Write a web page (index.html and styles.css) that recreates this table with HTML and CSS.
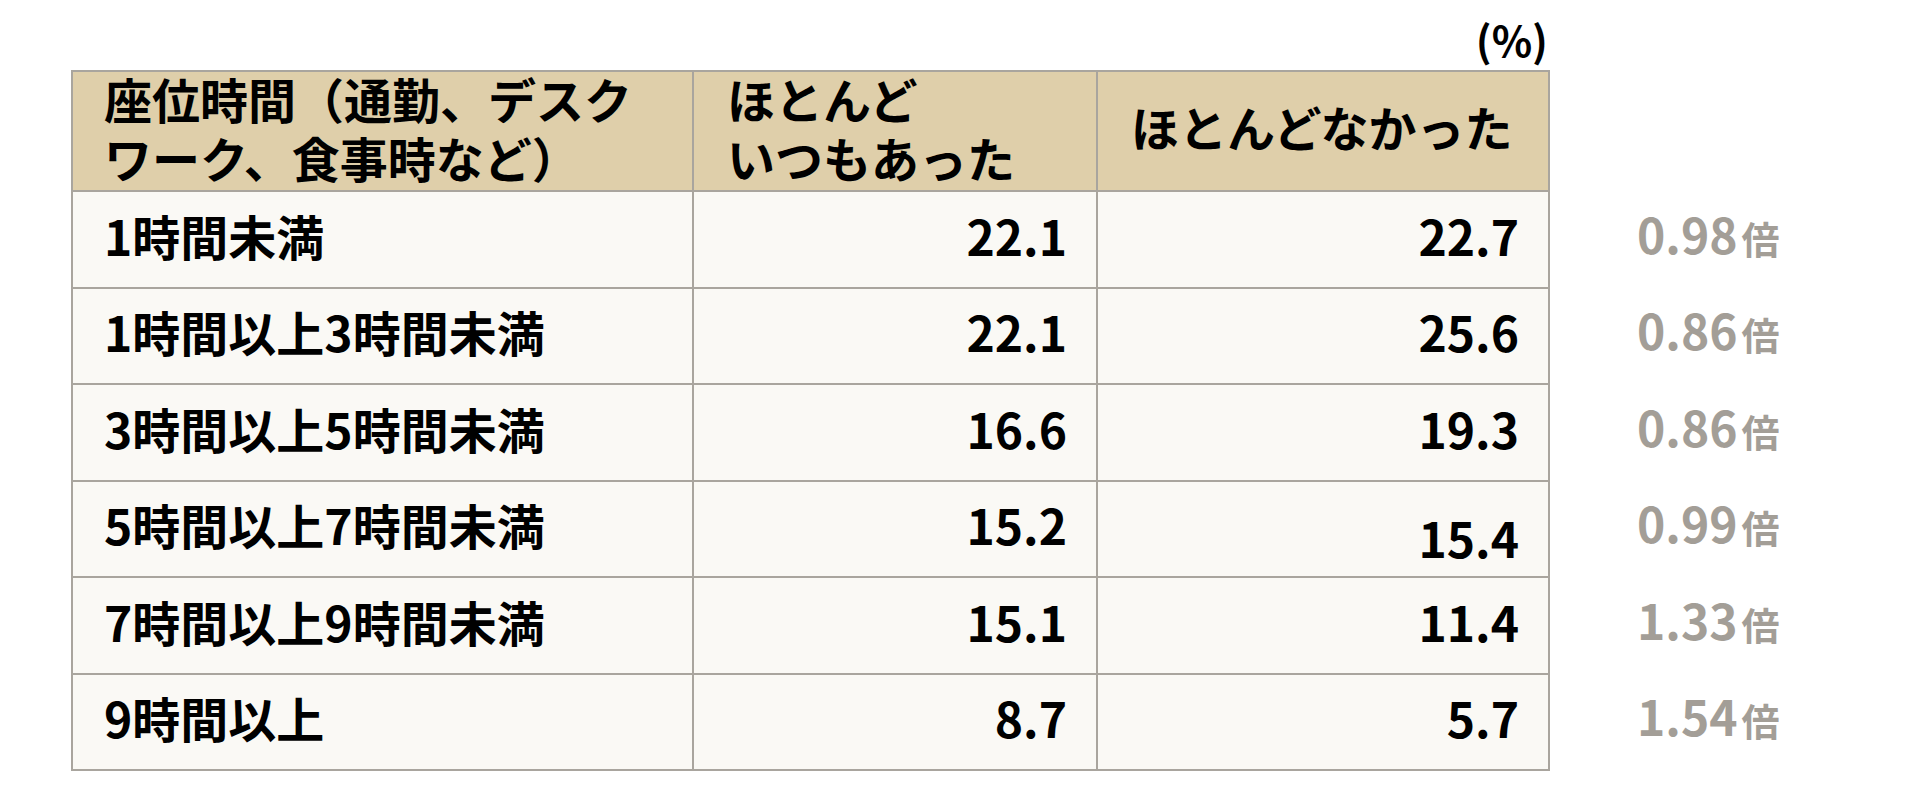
FILE: index.html
```html
<!DOCTYPE html>
<html lang="ja">
<head>
<meta charset="utf-8">
<title>座位時間</title>
<link rel="stylesheet" href="styles.css">
</head>
<body>
<div class="page">
  <div class="unit">(%)</div>
  <table class="data">
    <colgroup>
      <col class="c1">
      <col class="c2">
      <col class="c3">
      <col class="c4">
    </colgroup>
    <thead>
      <tr class="head">
        <th class="lab"><div class="hd">座位時間（通勤、デスク<br>ワーク、食事時など）</div></th>
        <th class="lab2"><div class="hd">ほとんど<br>いつもあった</div></th>
        <th class="lab3">ほとんどなかった</th>
        <th class="ratio-head"></th>
      </tr>
    </thead>
    <tbody>
      <tr><td class="lab">1時間未満</td><td class="num">22.1</td><td class="num">22.7</td><td class="ratio">0.98<span class="bai">倍</span></td></tr>
      <tr><td class="lab">1時間以上3時間未満</td><td class="num">22.1</td><td class="num">25.6</td><td class="ratio">0.86<span class="bai">倍</span></td></tr>
      <tr><td class="lab">3時間以上5時間未満</td><td class="num">16.6</td><td class="num">19.3</td><td class="ratio">0.86<span class="bai">倍</span></td></tr>
      <tr><td class="lab">5時間以上7時間未満</td><td class="num">15.2</td><td class="num low">15.4</td><td class="ratio">0.99<span class="bai">倍</span></td></tr>
      <tr><td class="lab">7時間以上9時間未満</td><td class="num">15.1</td><td class="num">11.4</td><td class="ratio">1.33<span class="bai">倍</span></td></tr>
      <tr><td class="lab">9時間以上</td><td class="num">8.7</td><td class="num">5.7</td><td class="ratio">1.54<span class="bai">倍</span></td></tr>
    </tbody>
  </table>
</div>
</body>
</html>
```
FILE: styles.css
```css
html, body {
  margin: 0;
  padding: 0;
  background: #ffffff;
}
body {
  font-family: "Noto Sans CJK JP", "Noto Sans", sans-serif;
  color: #000000;
}
.page {
  padding-left: 71px;
}
.unit {
  width: 1477px;
  height: 70px;
  box-sizing: border-box;
  display: flex;
  justify-content: flex-end;
  align-items: flex-end;
  font-size: 42px;
  font-weight: 700;
  line-height: 1;
  padding-bottom: 10px;
  padding-right: 0;
}
.data {
  border-collapse: collapse;
  table-layout: fixed;
  width: 1900px;
}
.c1 { width: 621px; }
.c2 { width: 404px; }
.c3 { width: 452px; }
.c4 { width: auto; }
.data th, .data td {
  box-sizing: border-box;
  border: 2px solid #a9a59e;
  padding: 0;
  font-size: 48px;
  font-weight: 700;
  line-height: 59px;
  vertical-align: middle;
  text-align: left;
  white-space: nowrap;
}
.head {
  height: 120px;
}
.head th {
  background: #dfcfaa;
  height: 120px;
}
.hd {
  margin-top: -6px;
}
.head .lab { padding-left: 31px; }
.head .lab2 { padding-left: 33px; }
.head .lab3 { padding-left: 33px; padding-bottom: 10px; }
tbody tr {
  height: 96.5px;
}
.data td {
  background: #faf9f5;
  height: 96.5px;
  padding-bottom: 8px;
}
td.lab { padding-left: 31px; }
td.num {
  text-align: right;
  padding-right: 29px;
}
td.num.low { padding-top: 25px; }
.data .ratio-head,
.data .ratio {
  border: none;
  background: #ffffff;
}
.data .ratio {
  color: #a39e97;
  font-weight: 700;
  padding-left: 87px;
}
.bai {
  font-size: 38px;
  margin-left: 4px;
}
```
